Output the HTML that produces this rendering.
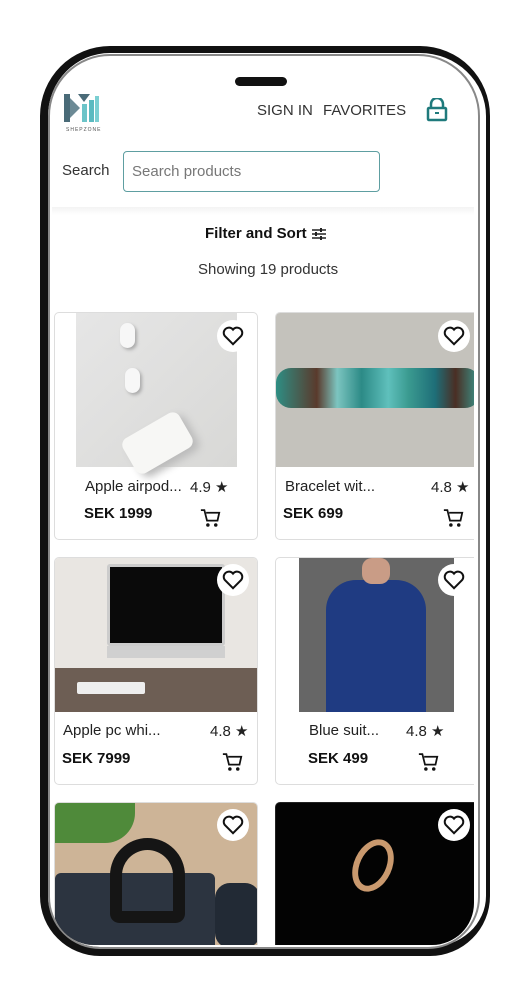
<!DOCTYPE html>
<html><head><style>
*{margin:0;padding:0;box-sizing:border-box}
body{width:527px;height:1000px;background:#fff;position:relative;overflow:hidden;font-family:"Liberation Sans",sans-serif}
.frame{position:absolute;left:40px;top:46px;width:450px;height:910px;border-style:solid;border-color:#111;border-width:7px 4px 9px 8px;border-radius:70px 70px 60px 60px;background:#fff}
.frame2{position:absolute;left:48px;top:54px;width:432px;height:895px;border:2px solid #888;border-radius:62px 62px 52px 52px}
.screen{position:absolute;left:52px;top:62px;width:422px;height:883px;overflow:hidden;border-radius:52px 52px 42px 42px;background:#fff}
.in{position:absolute;left:-52px;top:-62px;width:527px;height:1000px}
.notch{position:absolute;left:235px;top:77px;width:52px;height:9px;background:#111;border-radius:5px}
.abs{position:absolute}
.card{position:absolute;border:1px solid #ddd;border-radius:5px;background:#fff;overflow:hidden}
.heart{position:absolute;width:32px;height:32px;border-radius:50%;background:#fff;display:flex;align-items:center;justify-content:center}
.t{position:absolute;font-size:15px;color:#222;white-space:nowrap}
.p{position:absolute;font-size:15px;color:#111;font-weight:bold}
</style></head><body>
<div class="frame"></div>
<div class="frame2"></div>
<div class="screen"><div class="in">
<div class="abs" style="left:0;top:207px;width:527px;height:8px;background:linear-gradient(#f3f3f3,#fff)"></div>
<!-- logo -->
<svg class="abs" style="left:64px;top:94px" width="36" height="30" viewBox="0 0 36 30">
<polygon points="0,0 6,0 6,28 0,28" fill="#4a6b78"/>
<polygon points="6,4 16,14 6,24" fill="#6c8a95"/>
<polygon points="14,0 26,0 20,8" fill="#4a6b78"/>
<rect x="18" y="10" width="5" height="18" fill="#6cc4c8"/>
<rect x="25" y="6" width="5" height="22" fill="#5bbac0"/>
<rect x="31" y="2" width="4" height="26" fill="#7bcfd2"/>
</svg>
<div class="abs" style="left:66px;top:127px;font-size:5px;color:#555;letter-spacing:1px">SHEPZONE</div>
<div class="t" style="left:257px;top:102px;font-size:15px;color:#333">SIGN IN</div>
<div class="t" style="left:323px;top:102px;font-size:15px;color:#333">FAVORITES</div>
<svg class="abs" style="left:426px;top:98px" width="22" height="24" viewBox="0 0 22 24"><path d="M5 10V6a6 6 0 0 1 12 0v4" fill="none" stroke="#1f7a7c" stroke-width="2.5"/><rect x="2" y="10" width="18" height="12" rx="1" fill="none" stroke="#1f7a7c" stroke-width="2.5"/><rect x="9" y="14" width="4" height="2" fill="#1f7a7c"/></svg>
<div class="t" style="left:62px;top:162px;color:#333">Search</div>
<div class="abs" style="left:123px;top:151px;width:257px;height:41px;border:1px solid #5e9ea1;border-radius:4px;padding:11px 8px;font-size:15px;color:#777">Search products</div>
<div class="t" style="left:205px;top:225px;font-weight:bold;color:#111">Filter and Sort</div>
<svg class="abs" style="left:312px;top:228px" width="14" height="12" viewBox="0 0 14 12"><path d="M0 2h14M0 6h14M0 10h14" stroke="#222" stroke-width="1.6"/><path d="M9 0v4M4 4v4M9 8v4" stroke="#222" stroke-width="2"/></svg>
<div class="t" style="left:198px;top:261px;color:#333">Showing 19 products</div>

<div class="card" style="left:54px;top:312px;width:204px;height:228px">
<div class="abs" style="left:21px;top:0;width:161px;height:154px;background:linear-gradient(135deg,#e6e6e6,#d8d8d6)"></div>
<div class="abs" style="left:70px;top:110px;width:65px;height:40px;background:#f7f7f5;border-radius:8px;transform:rotate(-30deg);box-shadow:4px 6px 8px #bbb"></div>
<div class="abs" style="left:65px;top:10px;width:15px;height:25px;background:#f7f7f7;border-radius:8px;box-shadow:2px 2px 3px #aaa"></div>
<div class="abs" style="left:70px;top:55px;width:15px;height:25px;background:#f7f7f7;border-radius:8px;box-shadow:2px 2px 3px #aaa"></div>
</div>
<div class="card" style="left:275px;top:312px;width:204px;height:228px">
<div class="abs" style="left:0;top:0;width:204px;height:154px;background:#c4c2bc"></div>
<div class="abs" style="left:0;top:55px;width:204px;height:40px;border-radius:15px;background:linear-gradient(90deg,#2e8e84,#5a3a2c 20%,#7cc5c0 30%,#2c8a86 42%,#5fc0bc 55%,#3a9a90 65%,#1e6e78 78%,#4a2e24 88%,#3a9a90)"></div>
</div>
<div class="card" style="left:54px;top:557px;width:204px;height:228px">
<div class="abs" style="left:0;top:0;width:204px;height:154px;background:#e9e6e2"></div>
<div class="abs" style="left:0;top:110px;width:204px;height:44px;background:#6d5e54"></div>
<div class="abs" style="left:52px;top:6px;width:118px;height:82px;background:#0a0a0a;border:3px solid #ccc;border-radius:3px"></div>
<div class="abs" style="left:52px;top:88px;width:118px;height:12px;background:#d0d0d0"></div>
<div class="abs" style="left:22px;top:124px;width:68px;height:12px;background:#eee;border-radius:2px"></div>
</div>
<div class="card" style="left:275px;top:557px;width:204px;height:228px">
<div class="abs" style="left:23px;top:0;width:155px;height:154px;background:#666"></div>
<div class="abs" style="left:50px;top:22px;width:100px;height:132px;background:#1f3b82;border-radius:30px 30px 0 0"></div>
<div class="abs" style="left:86px;top:0;width:28px;height:26px;background:#c99c86;border-radius:10px"></div>
</div>
<div class="card" style="left:54px;top:802px;width:204px;height:160px">
<div class="abs" style="left:0;top:0;width:204px;height:160px;background:#cdb497"></div>
<div class="abs" style="left:0;top:70px;width:160px;height:90px;background:#2c3440;border-radius:6px"></div>
<div class="abs" style="left:160px;top:80px;width:45px;height:65px;background:#222a35;border-radius:15px"></div>
<div class="abs" style="left:55px;top:35px;width:75px;height:85px;border:12px solid #151515;border-radius:40px 40px 10px 10px"></div>
<div class="abs" style="left:0;top:0;width:80px;height:40px;background:#4f8a3a;border-radius:0 0 30px 0"></div>
</div>
<div class="card" style="left:275px;top:802px;width:204px;height:160px;background:#030303;border-color:#222">
<div class="abs" style="left:78px;top:35px;width:38px;height:55px;border:6px solid #c9996e;border-radius:50%;transform:rotate(25deg)"></div>
</div>

<div class="heart" style="left:217px;top:320px"><svg width="22" height="20" viewBox="0 0 24 22"><path d="M12 20 3 11a5 5 0 0 1 9-7 5 5 0 0 1 9 7z" fill="none" stroke="#111" stroke-width="2.2"/></svg></div>
<div class="heart" style="left:438px;top:320px"><svg width="22" height="20" viewBox="0 0 24 22"><path d="M12 20 3 11a5 5 0 0 1 9-7 5 5 0 0 1 9 7z" fill="none" stroke="#111" stroke-width="2.2"/></svg></div>
<div class="heart" style="left:217px;top:564px"><svg width="22" height="20" viewBox="0 0 24 22"><path d="M12 20 3 11a5 5 0 0 1 9-7 5 5 0 0 1 9 7z" fill="none" stroke="#111" stroke-width="2.2"/></svg></div>
<div class="heart" style="left:438px;top:564px"><svg width="22" height="20" viewBox="0 0 24 22"><path d="M12 20 3 11a5 5 0 0 1 9-7 5 5 0 0 1 9 7z" fill="none" stroke="#111" stroke-width="2.2"/></svg></div>
<div class="heart" style="left:217px;top:809px"><svg width="22" height="20" viewBox="0 0 24 22"><path d="M12 20 3 11a5 5 0 0 1 9-7 5 5 0 0 1 9 7z" fill="none" stroke="#111" stroke-width="2.2"/></svg></div>
<div class="heart" style="left:438px;top:809px"><svg width="22" height="20" viewBox="0 0 24 22"><path d="M12 20 3 11a5 5 0 0 1 9-7 5 5 0 0 1 9 7z" fill="none" stroke="#111" stroke-width="2.2"/></svg></div>

<div class="t" style="left:85px;top:478px">Apple airpod...</div><div class="t" style="left:190px;top:478px">4.9 ★</div>
<div class="p" style="left:84px;top:505px">SEK 1999</div>
<div class="t" style="left:285px;top:478px">Bracelet wit...</div><div class="t" style="left:431px;top:478px">4.8 ★</div>
<div class="p" style="left:283px;top:505px">SEK 699</div>
<div class="t" style="left:63px;top:722px">Apple pc whi...</div><div class="t" style="left:210px;top:722px">4.8 ★</div>
<div class="p" style="left:62px;top:750px">SEK 7999</div>
<div class="t" style="left:309px;top:722px">Blue suit...</div><div class="t" style="left:406px;top:722px">4.8 ★</div>
<div class="p" style="left:308px;top:750px">SEK 499</div>
<svg class="abs" style="left:200px;top:508px" width="21" height="20" viewBox="0 0 24 22"><path d="M1 2h4l3 12h12l2-9H7" fill="none" stroke="#111" stroke-width="2"/><circle cx="9" cy="19" r="2" fill="#111"/><circle cx="18" cy="19" r="2" fill="#111"/></svg>
<svg class="abs" style="left:443px;top:508px" width="21" height="20" viewBox="0 0 24 22"><path d="M1 2h4l3 12h12l2-9H7" fill="none" stroke="#111" stroke-width="2"/><circle cx="9" cy="19" r="2" fill="#111"/><circle cx="18" cy="19" r="2" fill="#111"/></svg>
<svg class="abs" style="left:222px;top:752px" width="21" height="20" viewBox="0 0 24 22"><path d="M1 2h4l3 12h12l2-9H7" fill="none" stroke="#111" stroke-width="2"/><circle cx="9" cy="19" r="2" fill="#111"/><circle cx="18" cy="19" r="2" fill="#111"/></svg>
<svg class="abs" style="left:418px;top:752px" width="21" height="20" viewBox="0 0 24 22"><path d="M1 2h4l3 12h12l2-9H7" fill="none" stroke="#111" stroke-width="2"/><circle cx="9" cy="19" r="2" fill="#111"/><circle cx="18" cy="19" r="2" fill="#111"/></svg>
</div></div>
<div class="notch"></div>
</body></html>
